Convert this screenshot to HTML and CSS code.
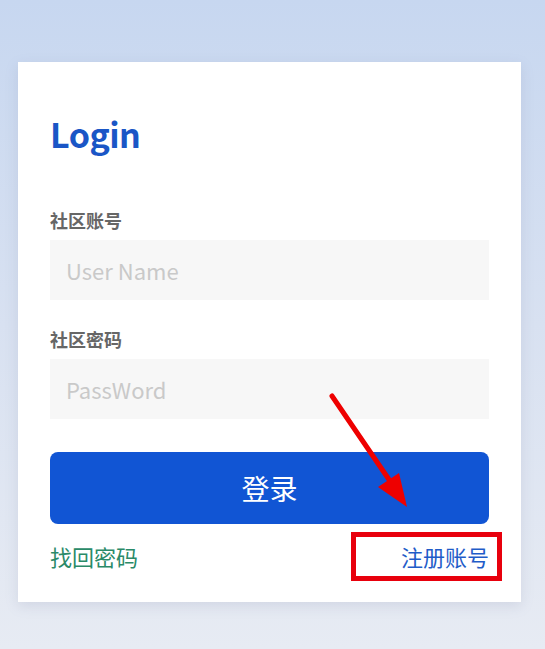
FILE: index.html
```html
<!DOCTYPE html>
<html lang="zh">
<head>
<meta charset="utf-8">
<link rel="stylesheet" href="styles.css">
</head>
<body>
<div class="card">
  <h1 class="title">Login</h1>
  <div class="field">
    <label class="label">社区账号</label>
    <div class="input">User Name</div>
  </div>
  <div class="field">
    <label class="label">社区密码</label>
    <div class="input">PassWord</div>
  </div>
  <button class="btn">登录</button>
  <div class="links">
    <span class="forgot">找回密码</span>
    <span class="register">注册账号</span>
  </div>
</div>
<svg class="arrow" width="545" height="649" viewBox="0 0 545 649">
  <line x1="332" y1="396" x2="392" y2="484" stroke="#ee0000" stroke-width="5" stroke-linecap="round"/>
  <polygon points="407,507 378,487 399,473" fill="#ee0000"/>
</svg>
</body>
</html>
```
FILE: styles.css
```css
html, body {
  margin: 0;
  padding: 0;
}
body {
  width: 545px;
  height: 649px;
  background: linear-gradient(180deg, #c7d7f0 0%, #d8e1f1 50%, #e7ebf3 100%);
  font-family: "Noto Sans CJK SC", "Noto Sans", sans-serif;
  padding-top: 62px;
  box-sizing: border-box;
  position: relative;
  overflow: hidden;
}
.card {
  margin-left: 18px;
  width: 503px;
  height: 540px;
  background: #fff;
  box-shadow: 0 4px 12px rgba(120, 130, 160, 0.18);
  box-sizing: border-box;
  padding: 0 32px 0 32px;
  position: relative;
}
.title {
  margin: 0;
  padding-top: 46px;
  font-size: 34px;
  line-height: 52px;
  font-weight: 700;
  letter-spacing: -0.5px;
  color: #1a56c6;
  height: 52px;
}
.field {
  display: flex;
  flex-direction: column;
}
.field:first-of-type {
  margin-top: 48px;
}
.label {
  font-size: 18px;
  line-height: 24px;
  font-weight: 700;
  color: #666;
  margin-bottom: 8px;
}
.input {
  height: 60px;
  background: #f7f7f7;
  color: #c9c9c9;
  font-size: 22px;
  line-height: 60px;
  padding-left: 16px;
  margin-bottom: 27px;
}
.btn {
  display: block;
  width: 100%;
  height: 72px;
  margin-top: 6px;
  border: none;
  border-radius: 8px;
  background: #1155d4;
  color: #fff;
  font-family: "Noto Sans CJK SC", sans-serif;
  font-size: 28px;
  padding: 0;
}
.links {
  display: flex;
  justify-content: space-between;
  align-items: center;
  margin-top: 14px;
  font-size: 22px;
  line-height: 36px;
}
.forgot {
  color: #2a8a68;
}
.register {
  color: #1f5cc8;
  position: relative;
  margin-right: 0;
}
.register::after {
  content: "";
  position: absolute;
  left: -50px;
  top: -6px;
  right: -13px;
  bottom: -7px;
  border: 5px solid #e8000d;
}
.arrow {
  position: absolute;
  left: 0;
  top: 0;
  pointer-events: none;
}
```
